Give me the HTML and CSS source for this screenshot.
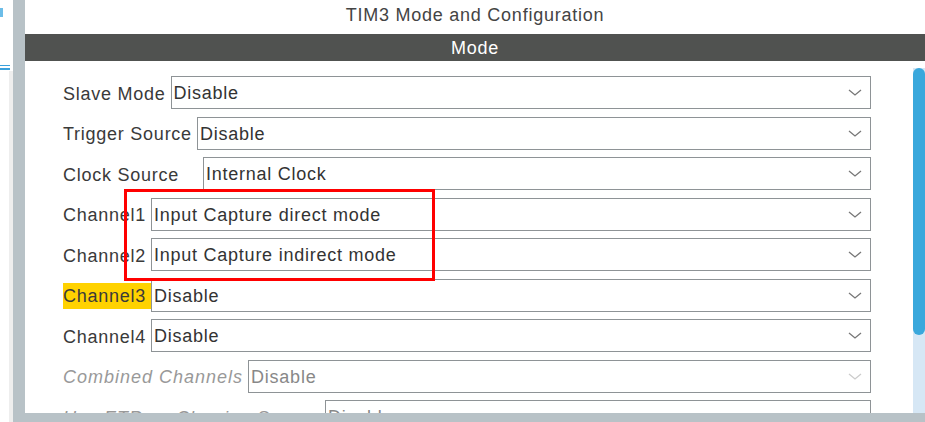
FILE: index.html
```html
<!DOCTYPE html>
<html lang="en">
<head>
<meta charset="UTF-8">
<title>TIM3 Mode and Configuration</title>
<link rel="stylesheet" href="styles.css">
</head>
<body>
    <div class="side">
        <div class="side_icon"></div>
        <div class="side_lines"></div>
        <div class="side_list"></div>
    </div>

    <div class="frame">
        <div class="main">
            <div class="title">TIM3 Mode and Configuration</div>
            <div class="bar">Mode</div>

            <div class="content">
                <div class="rows">
                    <div class="row">
                        <span class="label">Slave Mode</span>
                        <div class="select">Disable<svg class="arrow" viewBox="0 0 14 8"><polyline points="1,1 7,6 13,1"/></svg></div>
                    </div>
                    <div class="row">
                        <span class="label">Trigger Source</span>
                        <div class="select">Disable<svg class="arrow" viewBox="0 0 14 8"><polyline points="1,1 7,6 13,1"/></svg></div>
                    </div>
                    <div class="row">
                        <span class="label wide">Clock Source</span>
                        <div class="select">Internal Clock<svg class="arrow" viewBox="0 0 14 8"><polyline points="1,1 7,6 13,1"/></svg></div>
                    </div>
                    <div class="row">
                        <span class="label">Channel1</span>
                        <div class="select">Input Capture direct mode<svg class="arrow" viewBox="0 0 14 8"><polyline points="1,1 7,6 13,1"/></svg></div>
                    </div>
                    <div class="row">
                        <span class="label">Channel2</span>
                        <div class="select">Input Capture indirect mode<svg class="arrow" viewBox="0 0 14 8"><polyline points="1,1 7,6 13,1"/></svg></div>
                    </div>
                    <div class="row">
                        <span class="label marked">Channel3</span>
                        <div class="select">Disable<svg class="arrow" viewBox="0 0 14 8"><polyline points="1,1 7,6 13,1"/></svg></div>
                    </div>
                    <div class="row">
                        <span class="label">Channel4</span>
                        <div class="select">Disable<svg class="arrow" viewBox="0 0 14 8"><polyline points="1,1 7,6 13,1"/></svg></div>
                    </div>
                    <div class="row off">
                        <span class="label">Combined Channels</span>
                        <div class="select">Disable<svg class="arrow" viewBox="0 0 14 8"><polyline points="1,1 7,6 13,1"/></svg></div>
                    </div>
                    <div class="row off">
                        <span class="label">Use ETR as Clearing Source</span>
                        <div class="select">Disable<svg class="arrow" viewBox="0 0 14 8"><polyline points="1,1 7,6 13,1"/></svg></div>
                    </div>

                    <!-- red box drawn over the two channel rows -->
                    <div class="redbox"></div>
                </div>

                <div class="scroll">
                    <div class="thumb"></div>
                </div>
            </div>
        </div>
    </div>
</body>
</html>
```

FILE: styles.css
```css
html, body {
    margin: 0;
    height: 422px;
    overflow: hidden;
}
body {
    display: flex;
    font-family: "Liberation Sans", Arial, sans-serif;
    font-size: 18px;
    letter-spacing: 0.75px;
    color: #3a3a3a;
    background-color: white;
}
.side {
    width: 13px;
    display: flex;
    flex-direction: column;
}
.side_icon {
    width: 3px;
    height: 9px;
    margin-top: 8px;
    background-color: #6cbde8;
}
.side_lines {
    width: 10px;
    height: 2px;
    margin-top: 48px;
    border-top: 1px solid #3ba1dc;
    border-bottom: 2px solid #3ba1dc;
}
.side_list {
    flex: 1;
    margin-top: 1px;
    margin-left: 9px;
    background-color: #eeeeee;
}
.frame {
    flex: 1;
    display: flex;
    background-color: #b8c2c7;
    padding-left: 12px;
    padding-bottom: 9px;
}
.main {
    flex: 1;
    display: flex;
    flex-direction: column;
    background-color: white;
    min-width: 0;
}
.title {
    height: 34px;
    line-height: 30px;
    text-align: center;
    color: #444;
}
.bar {
    height: 26px;
    padding-top: 1px;
    line-height: 27px;
    background-color: #505250;
    color: white;
    text-align: center;
}
.content {
    flex: 1;
    display: flex;
    min-height: 0;
}
.rows {
    flex: 1;
    position: relative;
    display: flex;
    flex-direction: column;
    gap: 7.5px;
    padding: 15px 42px 0 38px;
    overflow: hidden;
}
.row {
    display: flex;
    align-items: center;
    height: 33px;
    flex-shrink: 0;
}
.label {
    margin-top: 2px;
    padding-right: 5px;
    line-height: 26px;
    white-space: nowrap;
}
.label.wide {
    padding-right: 24px;
}
.label.marked {
    background-color: #ffd200;
}
.select {
    flex: 1;
    position: relative;
    height: 33px;
    box-sizing: border-box;
    border: 1px solid #8e9396;
    padding-left: 2px;
    padding-top: 1px;
    line-height: 31px;
    color: #333;
    white-space: nowrap;
}
.arrow {
    position: absolute;
    right: 8px;
    top: 12px;
    width: 14px;
    height: 8px;
    fill: none;
    stroke: #777;
    stroke-width: 1.3;
}
.row.off .label {
    font-style: italic;
    letter-spacing: 1px;
    color: #999;
}
.row.off .select {
    color: #888;
}
.row.off .arrow {
    stroke: #cccccc;
}
.redbox {
    position: absolute;
    left: 99px;
    top: 128px;
    width: 305px;
    height: 86px;
    border: 3px solid #ff0000;
}
.scroll {
    width: 12px;
    margin-top: 7px;
    background-color: #d6e7f5;
}
.thumb {
    height: 267px;
    border-radius: 6px;
    background-color: #3aa8dc;
}
```
